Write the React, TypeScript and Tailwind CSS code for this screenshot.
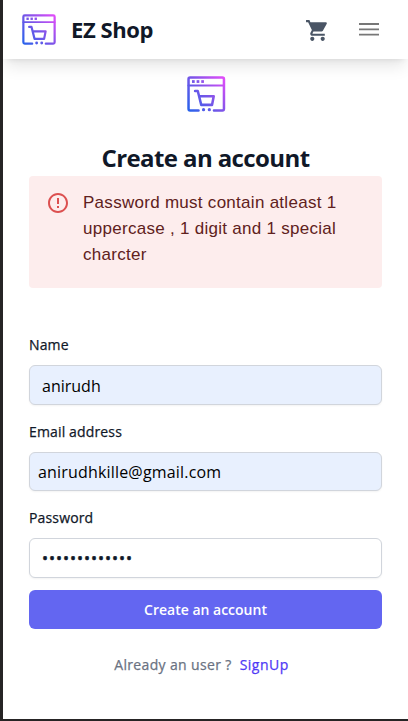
import { useId } from "react";
import { MdShoppingCart } from "react-icons/md";

function Logo({ className }: { className: string }) {
  const id = useId();
  return (
    <svg viewBox="0 0 100 91" preserveAspectRatio="none" className={className} fill="none">
      <defs>
        <linearGradient id={id} gradientUnits="userSpaceOnUse" x1="2" y1="89" x2="98" y2="2">
          <stop offset="0" stopColor="#2563eb" />
          <stop offset="0.5" stopColor="#7a55e8" />
          <stop offset="1" stopColor="#e64cfa" />
        </linearGradient>
      </defs>
      <g stroke={`url(#${id})`} strokeWidth="6.5" strokeLinecap="round" strokeLinejoin="round">
        <path d="M30 87H8Q4 87 4 83V8Q4 4 8 4H92Q96 4 96 8V83Q96 87 92 87H70" />
        <path d="M4 24H96" strokeWidth="5.5" />
        <path d="M21 38H28L37 73H65L69.500 51H33" />
      </g>
      <g fill={`url(#${id})`}>
        <rect x="13" y="10.500" width="7" height="7" />
        <rect x="25" y="10.500" width="7" height="7" />
        <rect x="37" y="10.500" width="7" height="7" />
        <circle cx="43" cy="85" r="4.200" />
        <circle cx="58" cy="85" r="4.200" />
      </g>
    </svg>
  );
}

function Field({ label, type, value, inputClass }: { label: string; type: string; value: string; inputClass: string }) {
  return (
    <label className="block">
      <span className="block h-6 text-[14px] leading-6 font-medium tracking-[0.15px] text-gray-900 [-webkit-text-stroke:0.25px]">{label}</span>
      <input
        type={type}
        defaultValue={value}
        className={`mt-2 block h-[39.500px] w-full rounded-md border border-gray-300 text-[16px] shadow-xs outline-none ${inputClass}`}
      />
    </label>
  );
}

export default function App() {
  return (
    <div className="flex h-[721px] w-[408px] flex-col overflow-hidden border-b-2 border-l-3 border-[#262425] bg-white font-['Open_Sans','Noto_Sans',sans-serif]">
      <header className="flex h-[59px] shrink-0 items-center bg-white pr-[26px] pl-[19px] shadow-[0_10px_15px_-3px_rgba(0,0,0,0.1),0_4px_6px_-4px_rgba(0,0,0,0.1)]">
        <Logo className="h-[31px] w-[34px]" />
        <span className="-mt-px ml-[15px] text-[22px] leading-8 font-bold tracking-[-0.4px] whitespace-nowrap text-gray-900">EZ Shop</span>
        <MdShoppingCart className="mt-[2px] ml-auto size-[25px] text-gray-600" />
        <svg viewBox="0 0 26 26" className="ml-[26px] size-[26px]" fill="none" stroke="#777777" strokeWidth="1.8">
          <path d="M3 7H23M3 12.300H23M3 17.600H23" />
        </svg>
      </header>
      <main className="flex flex-col px-[26px] pt-[17px]">
        <Logo className="ml-[158px] h-[36px] w-[38.500px]" />
        <h2 className="mt-[28px] text-center text-[24px] leading-9 font-bold tracking-[-0.6px] whitespace-nowrap text-gray-900">Create an account</h2>
        <div className="flex h-[112px] rounded bg-[#fdeded] pt-[14px] pl-[17px]">
          <svg viewBox="0 0 24 24" className="mt-px size-[24px] shrink-0" fill="#dc5050">
            <path d="M11 15h2v2h-2zm0-8h2v6h-2zm.99-5C6.470 2 2 6.480 2 12s4.470 10 9.990 10C17.520 22 22 17.520 22 12S17.520 2 11.990 2zM12 20c-4.420 0-8-3.580-8-8s3.580-8 8-8 8 3.580 8 8-3.580 8-8 8z" />
          </svg>
          <p className="ml-[13px] w-[270px] font-['Liberation_Sans',Arial,sans-serif] text-[17px] leading-[26px] tracking-[0.28px] text-[#5f2120]">
            Password must contain atleast 1 uppercase , 1 digit and 1 special charcter
          </p>
        </div>
        <form className="mt-[45px] flex flex-col">
          <div className="flex flex-col gap-[15px]">
            <Field label="Name" type="text" value="anirudh" inputClass="bg-[#e8f0fe] px-3 pt-[2px] text-black" />
            <Field label="Email address" type="email" value="anirudhkille@gmail.com" inputClass="bg-[#e8f0fe] px-2 pt-[2px] tracking-[0.18px] text-black" />
            <Field label="Password" type="password" value="abcdefghijklm" inputClass="bg-white px-3 tracking-[0.98px] text-gray-900 [-webkit-text-stroke:0.5px]" />
          </div>
          <button type="button" className="mt-[12px] h-[39px] rounded-md bg-[#6366f1] pt-[2px] text-[14px] leading-6 font-semibold text-white">
            Create an account
          </button>
        </form>
        <p className="mt-[24px] flex justify-center gap-2 pr-2 text-[14px] leading-6 font-medium whitespace-nowrap text-gray-500 [-webkit-text-stroke:0.25px]">
          <span className="tracking-[0.35px]">Already an user ?</span>
          <a className="tracking-[0.5px] text-indigo-600">SignUp</a>
        </p>
      </main>
    </div>
  );
}
